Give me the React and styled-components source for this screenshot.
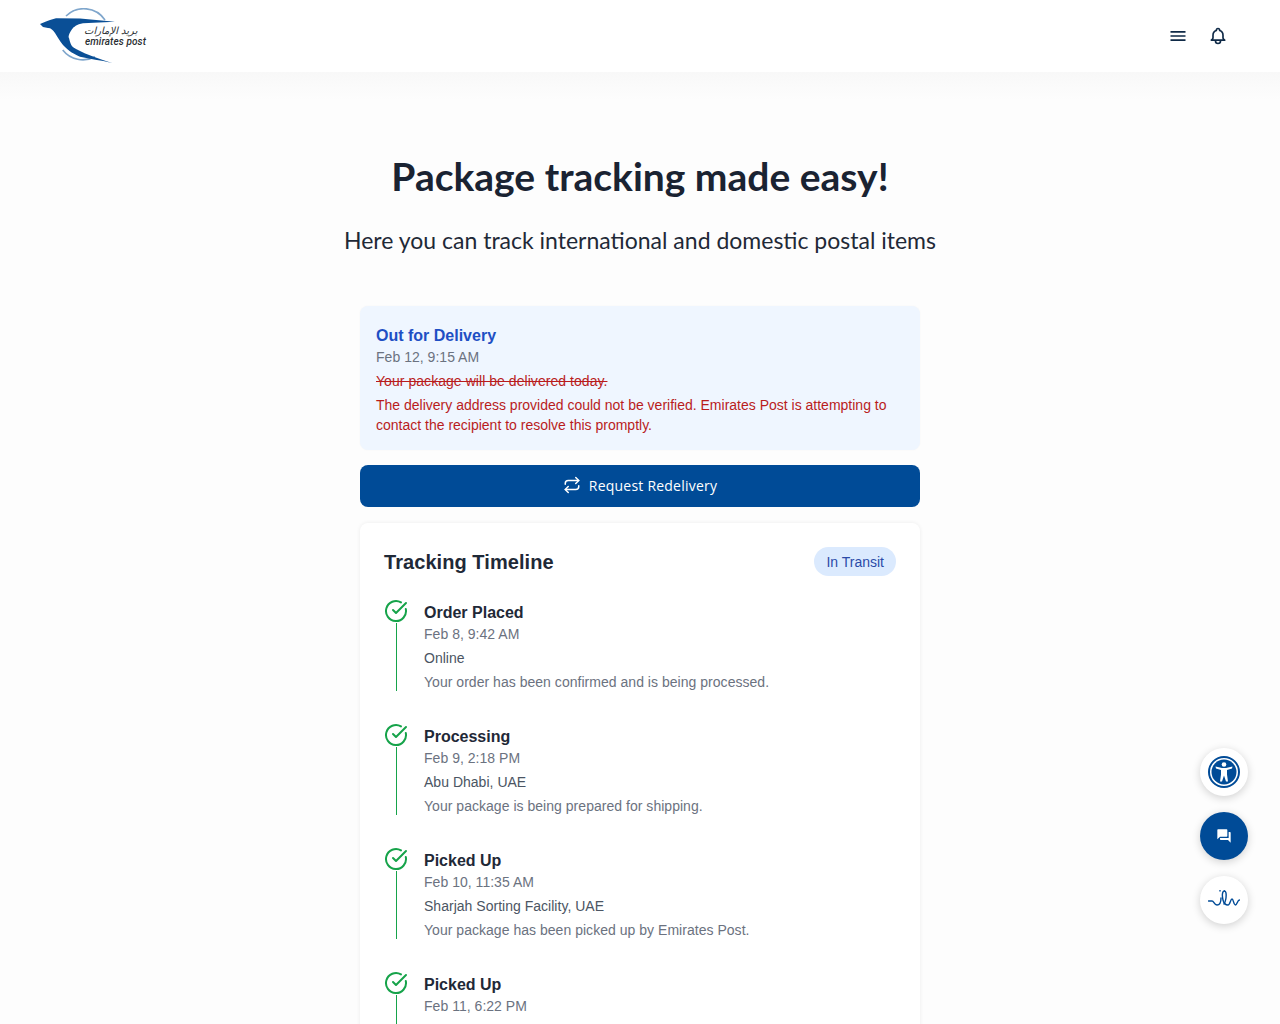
import React from "react";
import styled, { createGlobalStyle } from "styled-components";
import { CircleCheckBig, Repeat } from "lucide-react";
import { MdForum, MdMenu } from "react-icons/md";
import { HiOutlineBell } from "react-icons/hi";

const GlobalStyle = createGlobalStyle`
  html, body {
    margin: 0;
    padding: 0;
    height: 1024px;
    overflow: hidden;
    background: #fdfdfd;
    font-family: "Liberation Sans", Arial, sans-serif;
    color: #1f2937;
  }
  * { box-sizing: border-box; }
`;

const Page = styled.div`
  height: 1024px;
  overflow: hidden;
  background: linear-gradient(#f8f8f8 72px, #fdfdfd 100px);
`;

const Header = styled.header`
  height: 72px;
  background: #fff;
  display: flex;
  align-items: center;
  justify-content: space-between;
  padding: 0 52px 0 40px;
`;

const LogoWrap = styled.div`
  display: flex;
  width: 108px;
  height: 56px;
  position: relative;
`;

const LogoArabic = styled.span`
  position: absolute;
  left: 44px;
  top: 17px;
  width: 53px;
  text-align: right;
  font: italic 10px "DejaVu Sans", sans-serif;
  color: #2b2f33;
  line-height: 12px;
  white-space: nowrap;
`;

const LogoLatin = styled.span`
  position: absolute;
  left: 45px;
  top: 28px;
  font: italic 500 10px Roboto, sans-serif;
  letter-spacing: 0.1px;
  color: #2b2f33;
  line-height: 12px;
  white-space: nowrap;
`;

const HeaderActions = styled.div`
  display: flex;
  align-items: center;
  gap: 20px;
  color: #0f2a47;
`;

const IconButton = styled.button`
  width: 20px;
  height: 20px;
  padding: 0;
  border: none;
  background: none;
  color: inherit;
  display: flex;
  align-items: center;
  justify-content: center;
`;

const Hero = styled.section`
  padding-top: 80px;
  display: flex;
  flex-direction: column;
  align-items: center;
`;

const Title = styled.h1`
  margin: 0;
  font: 700 39px/48px Lato, sans-serif;
  color: #1a2332;
`;

const Subtitle = styled.p`
  margin: 22px 0 0;
  font: 400 23px/36px Lato, sans-serif;
  color: #1f2937;
`;

const Column = styled.main`
  width: 560px;
  margin: 48px auto 0;
  display: flex;
  flex-direction: column;
  gap: 15px;
`;

const StatusCard = styled.div`
  height: 144px;
  padding: 20px 16px 0;
  border-radius: 8px;
  background: #eff6ff;
  box-shadow: 0 0 2px rgba(0, 0, 0, 0.04);
`;

const StatusTitle = styled.div`
  font-size: 16px;
  line-height: 19px;
  font-weight: 700;
  color: #1e4fc4;
`;

const Muted = styled.div`
  font-size: 14px;
  line-height: 24px;
  letter-spacing: 0.03px;
  color: #6b7280;
`;

const StruckText = styled.div`
  font-size: 14px;
  line-height: 24px;
  letter-spacing: 0.05px;
  color: #b91c1c;
  text-decoration: line-through;
`;

const AlertText = styled.div`
  font-size: 14px;
  line-height: 20px;
  color: #b91c1c;
  margin-top: 2px;
`;

const RedeliverButton = styled.button`
  height: 42px;
  padding: 0 0 2px;
  border: none;
  border-radius: 8px;
  background: #004b97;
  color: #fff;
  display: flex;
  align-items: center;
  justify-content: center;
  gap: 8px;
  font: 400 14px "Open Sans", sans-serif;
  letter-spacing: 0.22px;
`;

const TimelineCard = styled.section`
  margin-top: 1px;
  padding: 24px;
  height: 600px;
  background: #fff;
  border-radius: 8px;
  box-shadow: 0 0 4px rgba(0, 0, 0, 0.07);
`;

const CardHead = styled.div`
  display: flex;
  align-items: center;
  justify-content: space-between;
  height: 29px;
`;

const CardTitle = styled.h2`
  margin: 0;
  font-size: 20px;
  line-height: 28px;
  font-weight: 700;
  letter-spacing: 0.06px;
  color: #1f2937;
`;

const Badge = styled.span`
  height: 29px;
  padding: 0 12px;
  display: flex;
  align-items: center;
  border-radius: 15px;
  background: #dbeafe;
  color: #2a4aa8;
  font-size: 14px;
`;

const Steps = styled.ol`
  list-style: none;
  margin: 23px 0 0;
  padding: 0;
`;

const Step = styled.li`
  display: flex;
  gap: 16px;
  height: 124px;
`;

const Rail = styled.div`
  width: 24px;
  display: flex;
  flex-direction: column;
  align-items: center;
  color: #16a34a;
`;

const RailLine = styled.div`
  width: 1px;
  height: 68px;
  background: #16a34a;
`;

const StepBody = styled.div`
  padding-top: 4px;
`;

const StepTitle = styled.div`
  font-size: 16px;
  line-height: 19px;
  font-weight: 700;
  color: #1f2937;
`;

const StepPlace = styled.div`
  font-size: 14px;
  line-height: 24px;
  letter-spacing: 0.02px;
  color: #4b5563;
`;

const StepNote = styled.div`
  font-size: 14px;
  line-height: 24px;
  letter-spacing: 0.03px;
  color: #6b7280;
`;

const Floating = styled.div`
  position: fixed;
  right: 32px;
  top: 748px;
  display: flex;
  flex-direction: column;
  gap: 16px;
`;

const Fab = styled.button`
  width: 48px;
  height: 48px;
  padding: 0;
  border: none;
  border-radius: 50%;
  background: ${(p) => (p.$filled ? "#004b97" : "#fff")};
  color: ${(p) => (p.$filled ? "#fff" : "#004b97")};
  box-shadow: 0 2px 8px rgba(0, 0, 0, 0.18);
  display: flex;
  align-items: center;
  justify-content: center;
`;

const steps = [
  { title: "Order Placed", date: "Feb 8, 9:42 AM", place: "Online", note: "Your order has been confirmed and is being processed." },
  { title: "Processing", date: "Feb 9, 2:18 PM", place: "Abu Dhabi, UAE", note: "Your package is being prepared for shipping." },
  { title: "Picked Up", date: "Feb 10, 11:35 AM", place: "Sharjah Sorting Facility, UAE", note: "Your package has been picked up by Emirates Post." },
  { title: "Picked Up", date: "Feb 11, 6:22 PM" },
];

function Logo() {
  return (
    <LogoWrap>
      <svg width="108" height="56" viewBox="0 0 108 56" fill="none">
        <path d="M26 8A25.5 25.5 0 0 1 65 12" stroke="#7fa6cc" strokeWidth="1.6" />
        <path d="M22.7 42A25.5 25.5 0 0 0 55 48.7" stroke="#7fa6cc" strokeWidth="1.6" />
        <path
          d="M0 16L6 13.5L10 12L16 10.3L40 10.5L75 13.7L43 15.3C37 16 33 20 33 20C29 25 28 29 29 30C31 39 33 39 36 41C47 47 60 51 72 55C60 52 50 51 40 48.7C31 45 27 41 23 37C19 32 17 28 15 25C13 22 11 20 8 20L3 19Z"
          fill="#0a4f96"
        />
      </svg>
      <LogoArabic>بريد الإمارات</LogoArabic>
      <LogoLatin>emirates post</LogoLatin>
    </LogoWrap>
  );
}

function AccessIcon() {
  return (
    <svg width="32" height="32" viewBox="0 0 32 32" fill="none">
      <circle cx="16" cy="16" r="15" stroke="#004b97" strokeWidth="2" />
      <circle cx="16" cy="16" r="12.5" fill="#004b97" />
      <circle cx="16" cy="8.5" r="2.3" fill="#fff" />
      <path d="M7.5 10.5L8 12.5L13 14V18.5L12 25.5H14L16 19.5L18 25.5H20L19 18.5V14L24 12.5L24.5 10.5L18 12H14Z" fill="#fff" />
    </svg>
  );
}

function WaveIcon() {
  return (
    <svg width="32" height="20" viewBox="0 0 32 20" fill="none" stroke="#004b97" strokeWidth="1.4" strokeLinecap="round">
      <path d="M0.5 11H4C6 11 6 15 9 15C12 15 13 12 13 8" />
      <path d="M16.5 1C14 1 14 6 15 10C16 14 18 15 20 15C22 15 22.5 9 24 9C25.5 9 25.5 15 27.5 15C29 15 29.5 10 31.5 10" />
      <path d="M16.5 1C18 1 18.5 4 18 8C17.5 11 17 13 16 14" />
      <path d="M12 0.5V1" />
    </svg>
  );
}

export default function App() {
  return (
    <Page>
      <GlobalStyle />
      <Header>
        <Logo />
        <HeaderActions>
          <IconButton><MdMenu size={20} /></IconButton>
          <IconButton><HiOutlineBell size={22} /></IconButton>
        </HeaderActions>
      </Header>
      <Hero>
        <Title>Package tracking made easy!</Title>
        <Subtitle>Here you can track international and domestic postal items</Subtitle>
      </Hero>
      <Column>
        <StatusCard>
          <StatusTitle>Out for Delivery</StatusTitle>
          <Muted>Feb 12, 9:15 AM</Muted>
          <StruckText>Your package will be delivered today.</StruckText>
          <AlertText>
            The delivery address provided could not be verified. Emirates Post is attempting to contact the recipient to resolve this promptly.
          </AlertText>
        </StatusCard>
        <RedeliverButton><Repeat size={18} />Request Redelivery</RedeliverButton>
        <TimelineCard>
          <CardHead>
            <CardTitle>Tracking Timeline</CardTitle>
            <Badge>In Transit</Badge>
          </CardHead>
          <Steps>
            {steps.map((s) => (
              <Step key={s.date}>
                <Rail>
                  <CircleCheckBig size={24} />
                  <RailLine />
                </Rail>
                <StepBody>
                  <StepTitle>{s.title}</StepTitle>
                  <Muted>{s.date}</Muted>
                  {s.place && <StepPlace>{s.place}</StepPlace>}
                  {s.note && <StepNote>{s.note}</StepNote>}
                </StepBody>
              </Step>
            ))}
          </Steps>
        </TimelineCard>
      </Column>
      <Floating>
        <Fab><AccessIcon /></Fab>
        <Fab $filled><MdForum size={16} /></Fab>
        <Fab><WaveIcon /></Fab>
      </Floating>
    </Page>
  );
}
